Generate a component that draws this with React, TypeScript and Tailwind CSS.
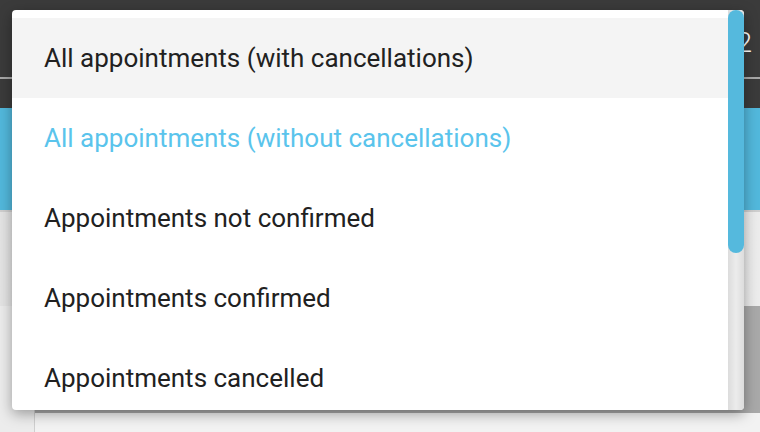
import React from 'react';

const options = [
  'All appointments (with cancellations)',
  'All appointments (without cancellations)',
  'Appointments not confirmed',
  'Appointments confirmed',
  'Appointments cancelled',
];

const App = () => {
  const hovered = 0;
  const selected = 1;

  return (
    <div className="relative h-[432px] w-[760px] overflow-hidden bg-[#f2f2f2] font-['Roboto',sans-serif]">
      {/* page behind the menu */}
      <div className="flex h-[77px] items-center justify-end bg-[#3b3b3b] pr-[8px] pt-[8px] text-[28px] font-light text-white">
        12
      </div>
      <div className="h-[2px] bg-[#a8a8a8]" />
      <div className="h-[29px] bg-[#3b3b3b]" />
      <div className="h-[102px] bg-[#52b8dc]" />
      <div className="h-[2px] bg-[#cfcfcf]" />
      <div className="h-[94px] bg-gradient-to-r from-[#e4e4e4] to-[#ececec]" />
      <div className="flex h-[126px]">
        <div className="w-[35px] border-r border-[#cfcfcf] bg-[#ececec]" />
        <div className="flex-1">
          <div className="h-[107px] bg-[#a9a9a9]" />
          <div className="h-[19px] bg-[#f2f2f2]" />
        </div>
      </div>

      {/* dropdown menu */}
      <div className="absolute left-[12px] top-[10px] flex h-[400px] w-[732px] overflow-hidden rounded-[4px] bg-white shadow-[0_4px_14px_rgba(0,0,0,0.35)]">
        <ul className="flex-1 pt-[8px]">
          {options.map((label, i) => (
            <li
              key={label}
              className={`flex h-[80px] items-center pl-[32px] text-[26px] ${
                i === hovered ? 'bg-[#f4f4f4]' : ''
              } ${i === selected ? 'text-[#5ac4ec]' : 'text-[#212121]'}`}
            >
              {label}
            </li>
          ))}
        </ul>
        <div className="w-[16px] bg-gradient-to-r from-[#dcdcdc] via-[#ececec] to-[#dcdcdc]">
          <div className="h-[243px] rounded-full bg-[#55b9dd]" />
        </div>
      </div>
    </div>
  );
};

export default App;
